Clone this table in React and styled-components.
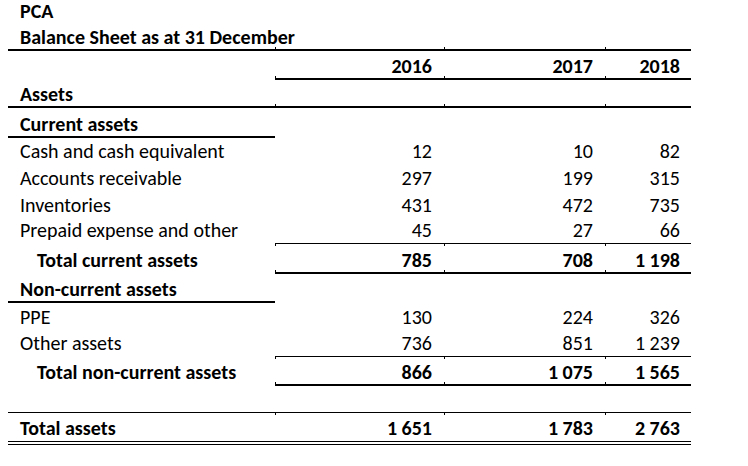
import React from "react";
import styled, { createGlobalStyle, css } from "styled-components";

const GlobalStyle = createGlobalStyle`
  html, body {
    margin: 0;
    padding: 0;
    background: #fff;
  }
  body {
    font-family: Carlito, Lato, "Liberation Sans", sans-serif;
    color: #000;
  }
`;

const Sheet = styled.div`
  display: flex;
  flex-direction: column;
  padding-left: 8px;
  width: 683px;
`;

const Row = styled.div`
  display: grid;
  grid-template-columns: 267px 169px 161px 86px;
  height: ${(p) => p.$h}px;
`;

// cell borders, drawn across the row boundary like Excel does
const lines = {
  thick: "inset 0 -1px 0 #000, 0 1px 0 #000",
  thin: "0 1px 0 #000",
  double: "inset 0 -1px 0 #000, inset 0 -3px 0 #fff, inset 0 -4px 0 #000",
};

// tiny gridline stubs where a border meets a column edge
const tick = css`
  &::before {
    content: "";
    position: absolute;
    left: 0;
    width: 1px;
    height: 2px;
    background: #000;
    top: ${(p) => (p.$line === "thick" ? "calc(100% - 3px)" : "calc(100% + 1px)")};
  }
`;

const Cell = styled.div`
  position: relative;
  display: flex;
  align-items: flex-end;
  justify-content: ${(p) => (p.$num ? "flex-end" : "flex-start")};
  padding: 0 ${(p) => (p.$num ? p.$pr : 0)}px ${(p) => (p.$line === "double" ? 6 : 2)}px
    ${(p) => (p.$num ? 0 : 12 + (p.$indent ? 17 : 0))}px;
  font-size: 20px;
  line-height: 22px;
  font-weight: ${(p) => (p.$bold ? 700 : 400)};
  white-space: nowrap;
  box-shadow: ${(p) => (p.$line ? lines[p.$line] : "none")};
  ${(p) => p.$num && (p.$line === "thick" || p.$line === "thin") && tick}
`;

const pads = [12, 12, 11];

const rows = [
  { label: "PCA", bold: true, h: 24 },
  { label: "Balance Sheet as at 31 December", bold: true, h: 26, labelLine: "thick", numLine: "thick" },
  { label: "", bold: true, h: 29, nums: ["2016", "2017", "2018"], numLine: "thick" },
  { label: "Assets", bold: true, h: 28, labelLine: "thick", numLine: "thick" },
  { label: "Current assets", bold: true, h: 30, labelLine: "thick" },
  { label: "Cash and cash equivalent", h: 27, nums: ["12", "10", "82"] },
  { label: "Accounts receivable", h: 27, nums: ["297", "199", "315"] },
  { label: "Inventories", h: 27, nums: ["431", "472", "735"] },
  { label: "Prepaid expense and other", h: 25, nums: ["45", "27", "66"], numLine: "thin" },
  { label: "Total current assets", bold: true, indent: true, h: 30, nums: ["785", "708", "1 198"], numLine: "thick" },
  { label: "Non-current assets", bold: true, h: 29, labelLine: "thick" },
  { label: "PPE", h: 28, nums: ["130", "224", "326"] },
  { label: "Other assets", h: 26, nums: ["736", "851", "1 239"], numLine: "thin" },
  { label: "Total non-current assets", bold: true, indent: true, h: 29, nums: ["866", "1 075", "1 565"], numLine: "thick" },
  { label: "", h: 27, labelLine: "thin", numLine: "thin" },
  { label: "Total assets", bold: true, h: 33, nums: ["1 651", "1 783", "2 763"], labelLine: "double", numLine: "double" },
];

export default function App() {
  return (
    <>
      <GlobalStyle />
      <Sheet>
        {rows.map((r, i) => (
          <Row key={i} $h={r.h}>
            <Cell $bold={r.bold} $indent={r.indent} $line={r.labelLine}>
              {r.label}
            </Cell>
            {pads.map((pr, j) => (
              <Cell key={j} $num $pr={pr} $bold={r.bold} $line={r.numLine}>
                {r.nums ? r.nums[j] : ""}
              </Cell>
            ))}
          </Row>
        ))}
      </Sheet>
    </>
  );
}
